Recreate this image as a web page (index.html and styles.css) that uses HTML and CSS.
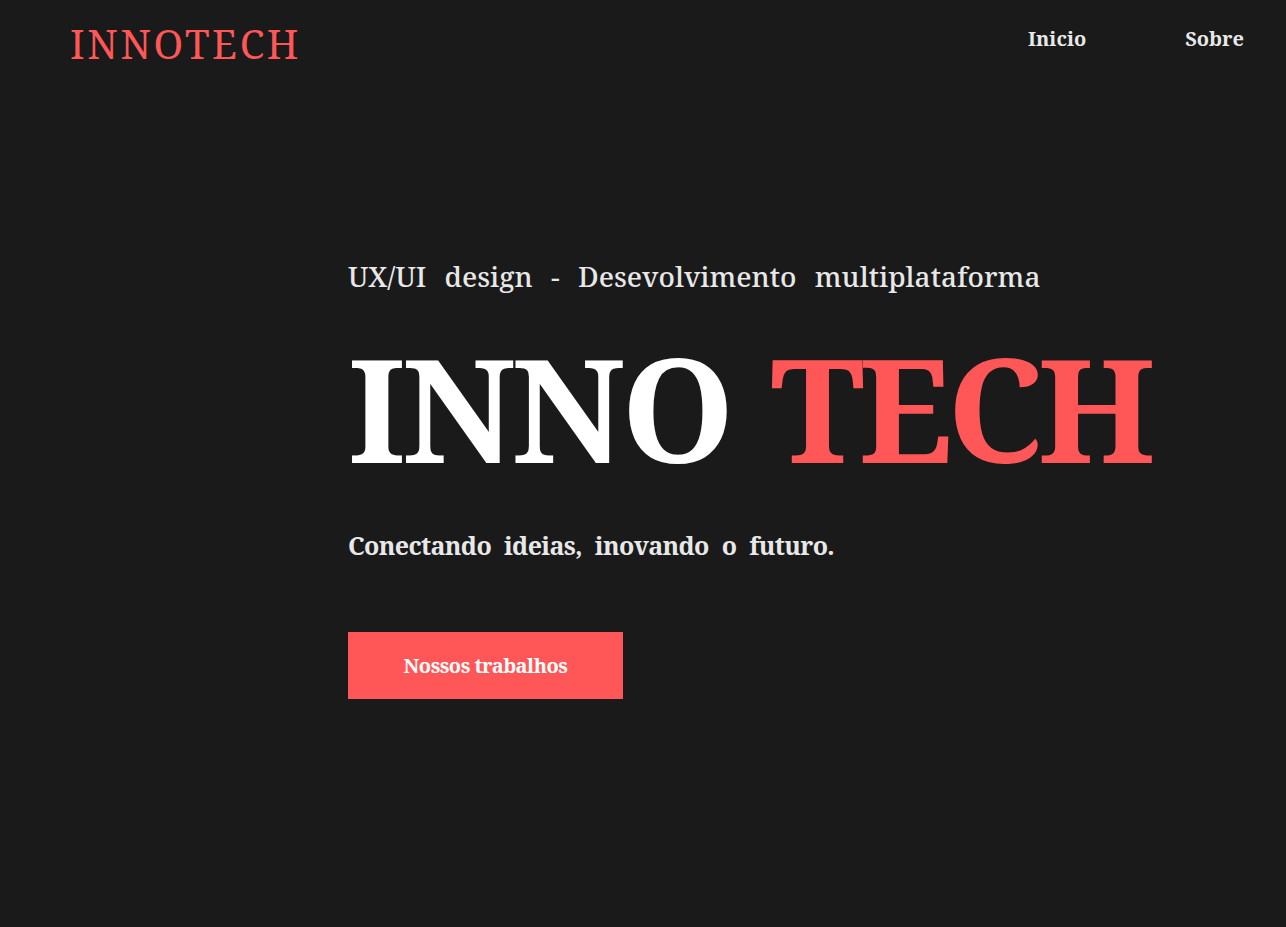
FILE: index.html
```html
<!DOCTYPE html>
<html lang="pt-BR">
<head>
<meta charset="utf-8">
<title>INNOTECH</title>
<link rel="stylesheet" href="styles.css">
</head>
<body>
<header class="header">
  <div class="logo">INNOTECH</div>
  <nav class="nav">
    <a href="#" class="nav-link">Inicio</a>
    <a href="#" class="nav-link">Sobre</a>
  </nav>
</header>
<main class="hero">
  <p class="hero-sub">UX/UI design - Desevolvimento multiplataforma</p>
  <h1 class="hero-title">INNO <span class="accent">TECH</span></h1>
  <p class="hero-tagline">Conectando ideias, inovando o futuro.</p>
  <a href="#" class="btn">Nossos trabalhos</a>
</main>
</body>
</html>
```
FILE: styles.css
```css
* { box-sizing: border-box; }
html, body { margin: 0; padding: 0; }
body {
  background: #1a1a1a;
  font-family: "Noto Serif", "DejaVu Serif", serif;
  color: #e8e8e8;
  min-height: 927px;
}
.header {
  display: flex;
  justify-content: space-between;
  align-items: flex-start;
  padding: 17px 42px 0 70px;
}
.logo {
  color: #ff5757;
  font-size: 40px;
  line-height: 54px;
  letter-spacing: 2.6px;
}
.nav {
  display: flex;
  gap: 99px;
  margin-top: 8px;
}
.nav-link {
  color: #e8e8e8;
  text-decoration: none;
  font-size: 20px;
  line-height: 27px;
  font-weight: 700;
}
.hero {
  padding: 186px 0 0 348px;
}
.hero-sub {
  margin: 0;
  font-size: 28px;
  line-height: 38px;
  font-weight: 500;
  word-spacing: 11px;
  color: #e8e8e8;
}
.hero-title {
  margin: 37px 0 0;
  font-size: 144px;
  line-height: 150px;
  font-weight: 700;
  letter-spacing: -3.8px;
  word-spacing: 6px;
  color: #ffffff;
}
.accent {
  color: #ff5757;
  letter-spacing: -5.7px;
}
.hero-tagline {
  margin: 46px 0 0;
  font-size: 25px;
  line-height: 34px;
  font-weight: 700;
  letter-spacing: -0.65px;
  word-spacing: 7px;
  color: #e8e8e8;
}
.btn {
  display: flex;
  justify-content: center;
  align-items: center;
  margin-top: 70px;
  width: 275px;
  height: 67px;
  background: #ff5757;
  color: #ffffff;
  text-decoration: none;
  font-size: 20px;
  font-weight: 700;
  letter-spacing: -0.5px;
}
```
